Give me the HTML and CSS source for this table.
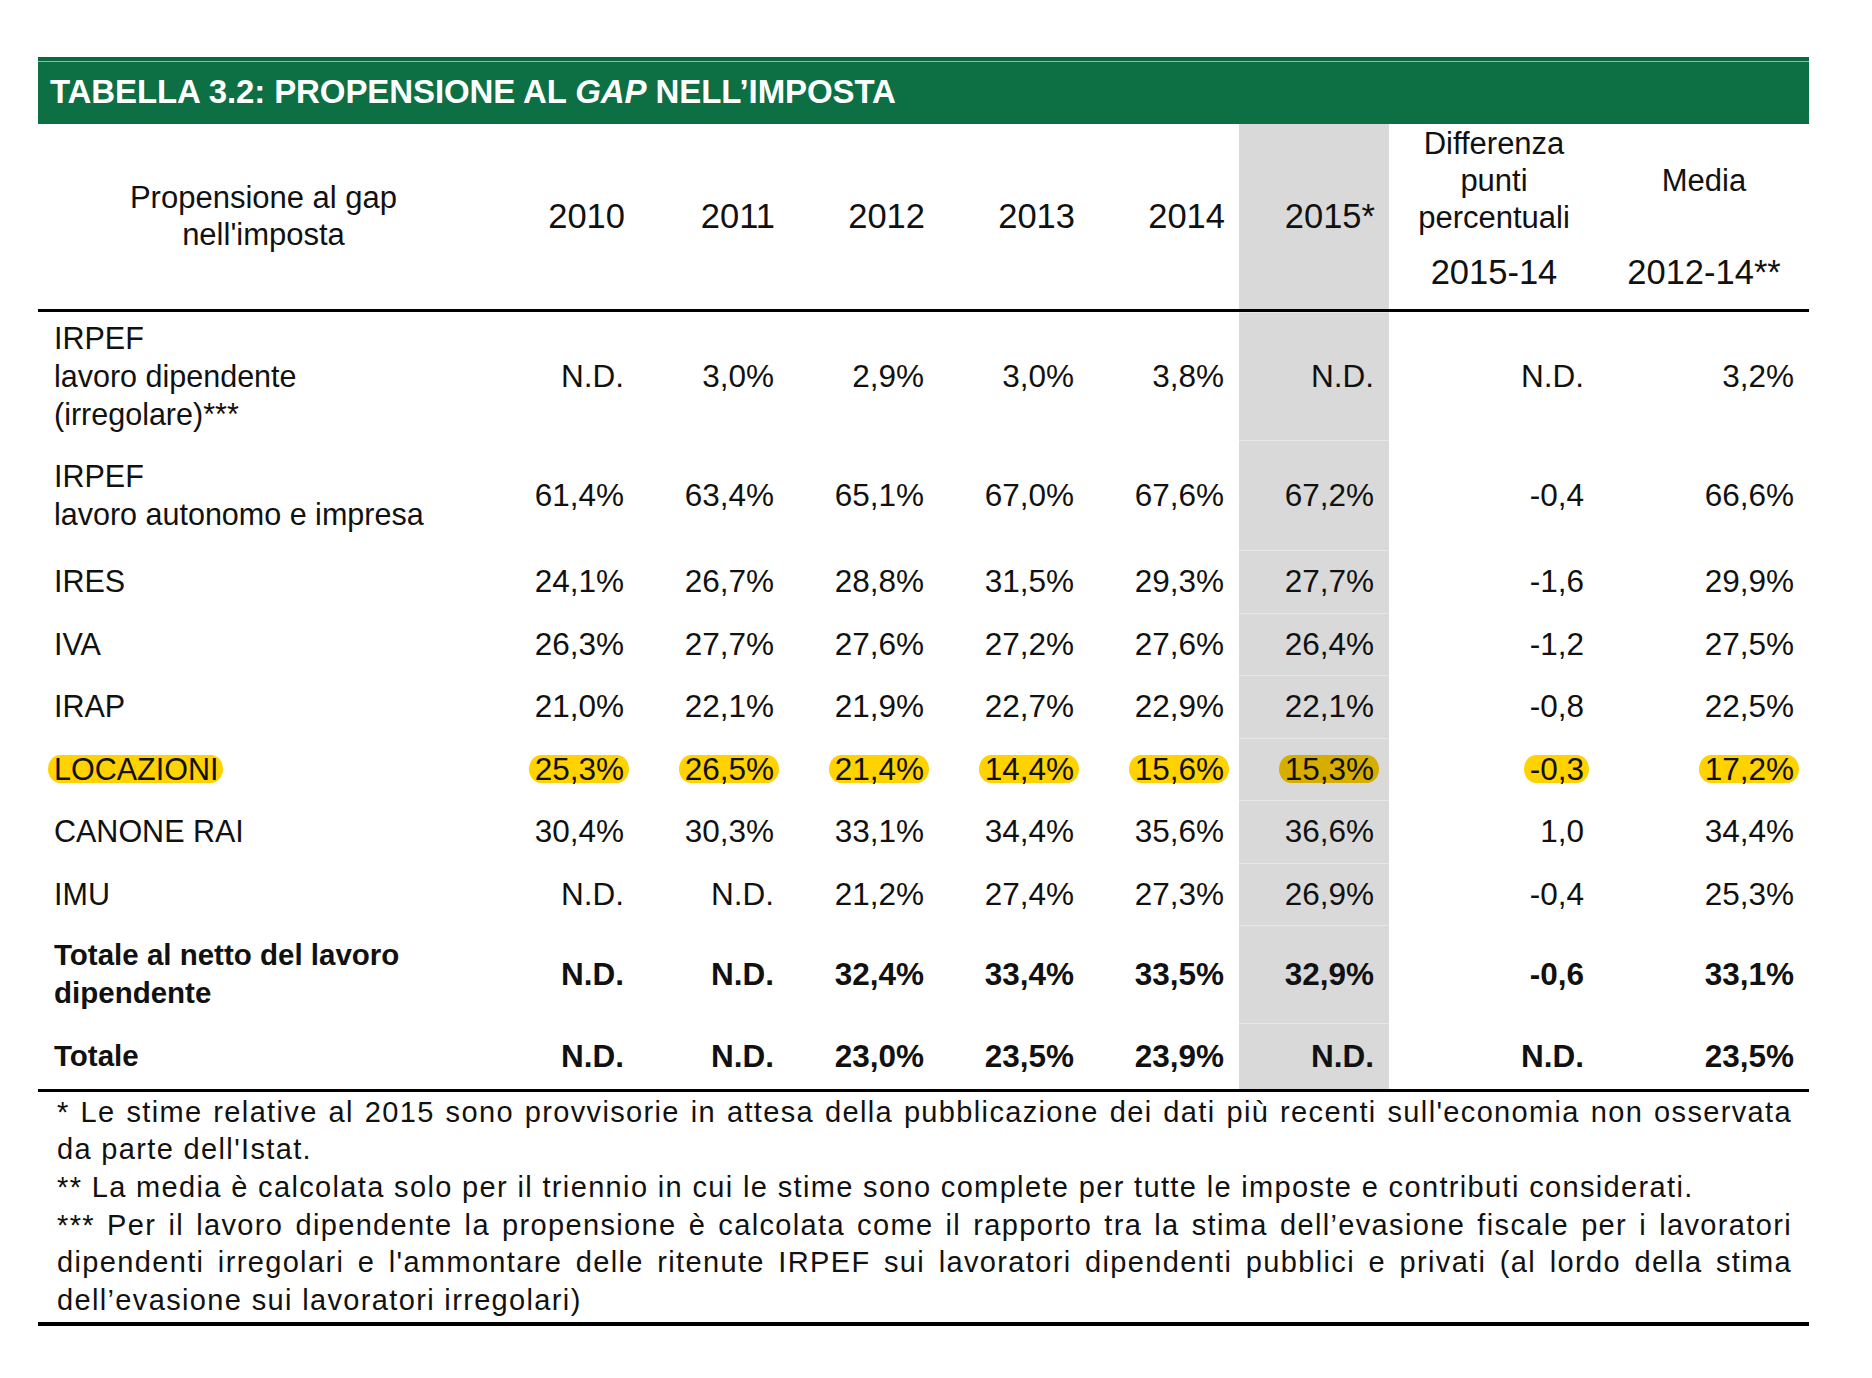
FILE: index.html
```html
<!DOCTYPE html>
<html lang="it">
<head>
<meta charset="utf-8">
<title>Tabella 3.2</title>
<link rel="stylesheet" href="styles.css">
</head>
<body>
<div class="page">
  <div class="title">TABELLA 3.2: PROPENSIONE AL <i>GAP</i> NELL’IMPOSTA</div>
  <table class="tbl">
    <colgroup>
      <col class="c-label"><col class="c-year"><col class="c-year"><col class="c-year"><col class="c-year"><col class="c-year"><col class="c-year"><col class="c-wide"><col class="c-wide">
    </colgroup>
    <thead>
      <tr class="h1">
        <th rowspan="2" class="hl-label">Propensione al gap<br>nell'imposta</th>
        <th rowspan="2" class="hy">2010</th>
        <th rowspan="2" class="hy">2011</th>
        <th rowspan="2" class="hy">2012</th>
        <th rowspan="2" class="hy">2013</th>
        <th rowspan="2" class="hy">2014</th>
        <th rowspan="2" class="hy gray">2015*</th>
        <th class="hc">Differenza<br>punti<br>percentuali</th>
        <th class="hc">Media</th>
      </tr>
      <tr class="h2">
        <th class="hc hn">2015-14</th>
        <th class="hc hn">2012-14**</th>
      </tr>
    </thead>
    <tbody>
      <tr class="r3">
        <td class="lbl">IRPEF<br>lavoro dipendente<br>(irregolare)***</td>
        <td>N.D.</td><td>3,0%</td><td>2,9%</td><td>3,0%</td><td>3,8%</td><td class="gray">N.D.</td><td>N.D.</td><td>3,2%</td>
      </tr>
      <tr class="r2">
        <td class="lbl">IRPEF<br>lavoro autonomo e impresa</td>
        <td>61,4%</td><td>63,4%</td><td>65,1%</td><td>67,0%</td><td>67,6%</td><td class="gray">67,2%</td><td>-0,4</td><td>66,6%</td>
      </tr>
      <tr class="r1">
        <td class="lbl">IRES</td>
        <td>24,1%</td><td>26,7%</td><td>28,8%</td><td>31,5%</td><td>29,3%</td><td class="gray">27,7%</td><td>-1,6</td><td>29,9%</td>
      </tr>
      <tr class="r1">
        <td class="lbl">IVA</td>
        <td>26,3%</td><td>27,7%</td><td>27,6%</td><td>27,2%</td><td>27,6%</td><td class="gray">26,4%</td><td>-1,2</td><td>27,5%</td>
      </tr>
      <tr class="r1">
        <td class="lbl">IRAP</td>
        <td>21,0%</td><td>22,1%</td><td>21,9%</td><td>22,7%</td><td>22,9%</td><td class="gray">22,1%</td><td>-0,8</td><td>22,5%</td>
      </tr>
      <tr class="r1">
        <td class="lbl"><span class="mark mark-l">LOCAZIONI</span></td>
        <td><span class="mark">25,3%</span></td><td><span class="mark">26,5%</span></td><td><span class="mark">21,4%</span></td><td><span class="mark">14,4%</span></td><td><span class="mark">15,6%</span></td><td class="gray"><span class="mark mark-d">15,3%</span></td><td><span class="mark">-0,3</span></td><td><span class="mark">17,2%</span></td>
      </tr>
      <tr class="r1">
        <td class="lbl">CANONE RAI</td>
        <td>30,4%</td><td>30,3%</td><td>33,1%</td><td>34,4%</td><td>35,6%</td><td class="gray">36,6%</td><td>1,0</td><td>34,4%</td>
      </tr>
      <tr class="r1">
        <td class="lbl">IMU</td>
        <td>N.D.</td><td>N.D.</td><td>21,2%</td><td>27,4%</td><td>27,3%</td><td class="gray">26,9%</td><td>-0,4</td><td>25,3%</td>
      </tr>
      <tr class="rt bold">
        <td class="lbl">Totale al netto del lavoro<br>dipendente</td>
        <td>N.D.</td><td>N.D.</td><td>32,4%</td><td>33,4%</td><td>33,5%</td><td class="gray">32,9%</td><td>-0,6</td><td>33,1%</td>
      </tr>
      <tr class="rl bold last">
        <td class="lbl">Totale</td>
        <td>N.D.</td><td>N.D.</td><td>23,0%</td><td>23,5%</td><td>23,9%</td><td class="gray">N.D.</td><td>N.D.</td><td>23,5%</td>
      </tr>
    </tbody>
  </table>
  <div class="notes">
    <p>* Le stime relative al 2015 sono provvisorie in attesa della pubblicazione dei dati più recenti sull'economia non osservata da parte dell'Istat.</p>
    <p>** La media è calcolata solo per il triennio in cui le stime sono complete per tutte le imposte e contributi considerati.</p>
    <p>*** Per il lavoro dipendente la propensione è calcolata come il rapporto tra la stima dell’evasione fiscale per i lavoratori dipendenti irregolari e l'ammontare delle ritenute IRPEF sui lavoratori dipendenti pubblici e privati (al lordo della stima dell’evasione sui lavoratori irregolari)</p>
  </div>
</div>
</body>
</html>
```

FILE: styles.css
```css
html, body {
  margin: 0;
  padding: 0;
  background: #ffffff;
}
body {
  font-family: "Liberation Sans", Arial, sans-serif;
  color: #111111;
}
.page {
  width: 1771px;
  padding: 57px 0 0 38px;
}
.title {
  height: 67px;
  box-sizing: border-box;
  background: linear-gradient(#0a6a40 0 4px, #7fc2a0 4px 5px, #0c7044 5px);
  color: #ffffff;
  font-weight: bold;
  font-size: 33px;
  line-height: 64px;
  padding: 3px 0 0 12px;
  letter-spacing: -0.1px;
}
.title i {
  font-style: italic;
}
.tbl {
  width: 1771px;
  table-layout: fixed;
  border-collapse: collapse;
  font-size: 31.5px;
}
.c-label { width: 451px; }
.c-year { width: 150px; }
.c-wide { width: 210px; }
.tbl th {
  font-weight: normal;
  font-size: 31px;
  line-height: 37px;
  padding: 0;
  vertical-align: middle;
}
.tbl th.hl-label {
  text-align: center;
  border-bottom: 3px solid #000;
}
.tbl th.hy {
  text-align: right;
  padding-right: 14px;
  font-size: 34.5px;
  border-bottom: 3px solid #000;
}
.tbl .h1 { height: 112px; }
.tbl .h2 { height: 74px; }
.tbl .h2 th { border-bottom: 3px solid #000; }
.tbl th.hn { font-size: 34.5px; }
.tbl td {
  text-align: right;
  vertical-align: middle;
  padding: 0 15px 0 0;
  line-height: 38px;
}
.tbl td.lbl {
  text-align: left;
  padding-left: 16px;
  font-size: 30.5px;
}
.gray {
  background: #d9d9d9;
}
.tbl td.gray {
  box-shadow: inset 0 1px 0 #e6e6e6;
}
.r3 { height: 130px; }
.r2 { height: 110px; }
.r1 { height: 62.5px; }
.rt { height: 98px; }
.rl { height: 67px; }
.bold td { font-weight: bold; }
.tbl .bold td.lbl { font-size: 29.5px; }
.last td { border-bottom: 3px solid #000; }
.mark {
  display: inline-block;
  background: #ffd200;
  border-radius: 14px / 16px;
  line-height: 28px;
  height: 28px;
  padding: 0 5px 0 6px;
  margin: 0 -5px 0 -6px;
}
.mark-d { background: #d6ae00; }
.notes {
  border-bottom: 4px solid #000;
  padding: 2px 17px 2px 19px;
  font-size: 29px;
  letter-spacing: 1.35px;
  line-height: 37.7px;
}
.notes p {
  margin: 0;
  text-align: justify;
}
```
